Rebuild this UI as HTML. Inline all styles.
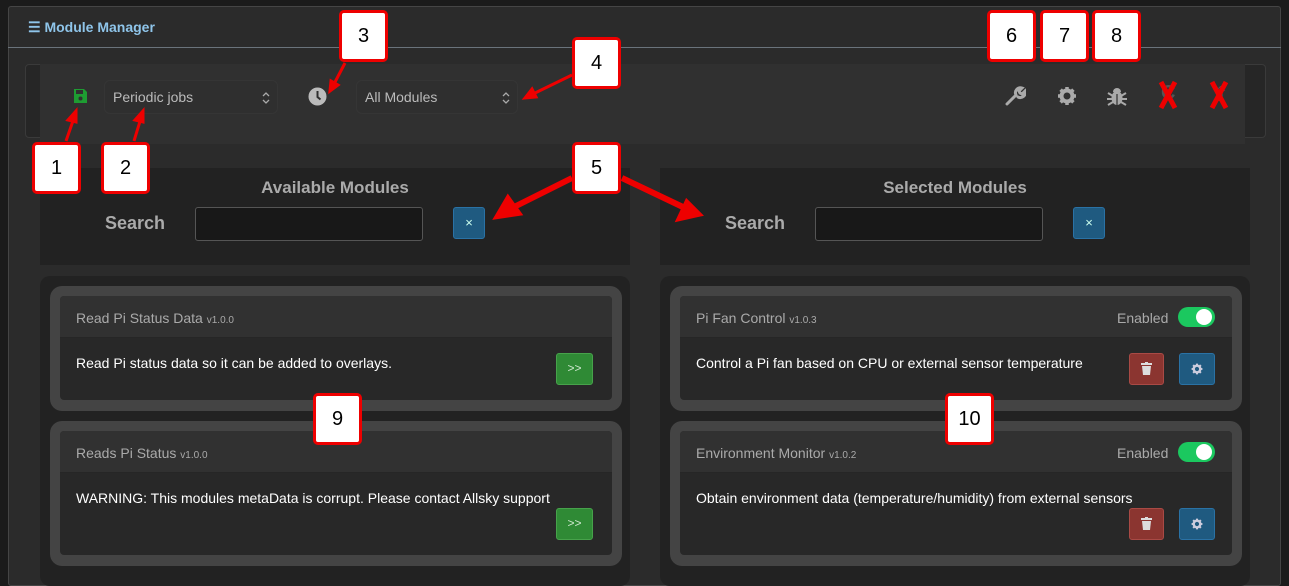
<!DOCTYPE html>
<html><head><meta charset="utf-8"><style>
*{box-sizing:border-box;margin:0;padding:0}
body{width:1289px;height:575px;background:#1b1b1b;font-family:"Liberation Sans",sans-serif;position:relative;overflow:hidden}
.a{position:absolute}
.panel{left:8px;top:6px;width:1273px;height:580px;background:#2b2b2b;border:1px solid #454545;border-radius:3px}
.hdr{left:8px;top:6px;width:1273px;height:42px;border-bottom:1px solid #6a737b}
.title{left:28px;top:19px;color:#8fc5ea;font-weight:bold;font-size:14px}
.tb-out{left:25px;top:64px;width:1241px;height:74px;border:1px solid #3a3a3a;border-radius:4px;background:#262626}
.tb{left:40px;top:64px;width:1205px;height:80px;background:#303030}
.sel{height:34px;border:1px solid #353535;border-radius:6px;color:#bbb;font-size:14px;padding:8px 8px;background:#2f2f2f}
.sel svg{position:absolute;right:6px;top:10px}
.sbox{background:#222;height:97px;top:168px;width:590px}
.h3{color:#aaa;font-weight:bold;font-size:17px;text-align:center}
.lab{color:#aaa;font-weight:bold;font-size:18px}
.inp{height:34px;background:#181818;border:1px solid #555;border-radius:3px}
.xb{width:32px;height:32px;background:#1f5a80;border:1px solid #2a72a5;border-radius:3px;color:#cfe;text-align:center;line-height:29px;font-size:13px}
.list{top:276px;width:590px;height:310px;background:#222;border-radius:10px}
.co{width:572px;background:#444;border-radius:12px}
.ci{width:552px;background:#282828;border-radius:4px}
.ch{height:42px;background:#313131;border-bottom:1px solid #262626;border-radius:4px 4px 0 0;color:#aaa;font-size:14px;padding:14px 16px}
.ch small{font-size:10px}
.desc{color:#fff;font-size:14px}
.gb{width:37px;height:32px;background:#2f8a35;border:1px solid #47a24b;border-radius:3px;color:#cfe8cf;text-align:center;line-height:29px;font-size:12px}
.rb{width:35px;height:32px;background:#8b3530;border:1px solid #a94a45;border-radius:3px}
.bb{width:36px;height:32px;background:#1f5a80;border:1px solid #2a72a5;border-radius:3px}
.tog{width:37px;height:20px;background:#1bc85f;border-radius:10px}
.tog:after{content:"";position:absolute;right:3px;top:2px;width:16px;height:16px;background:#fff;border-radius:50%}
.en{color:#aaa;font-size:14px}
.ann{width:49px;height:52px;background:#fff;border:3px solid #e00;border-radius:5px;font-size:20px;text-align:center;line-height:46px;color:#000}
</style></head><body>
<div class="a panel"></div>
<div class="a hdr"></div>
<div class="a title">☰ Module Manager</div>
<div class="a tb-out"></div>
<div class="a tb"></div>
<svg class="a" style="left:73px;top:88px" width="15" height="16" viewBox="0 0 15 16"><path d="M1 1h10l3 3v11H1z" fill="#1e9c32"/><rect x="3" y="2" width="7" height="4" fill="#303030"/><circle cx="7.5" cy="10.5" r="2" fill="#303030"/></svg>
<div class="a sel" style="left:104px;top:80px;width:174px">Periodic jobs<svg width="10" height="14"><path d="M2 5l3-3 3 3M2 9l3 3 3-3" stroke="#aaa" stroke-width="1.3" fill="none"/></svg></div>
<svg class="a" style="left:308px;top:87px" width="19" height="19" viewBox="0 0 19 19"><circle cx="9.5" cy="9.5" r="9" fill="#bbb"/><path d="M9.5 4v6l3 2.5" stroke="#303030" stroke-width="2" fill="none"/></svg>
<div class="a sel" style="left:356px;top:80px;width:162px">All Modules<svg width="10" height="14"><path d="M2 5l3-3 3 3M2 9l3 3 3-3" stroke="#aaa" stroke-width="1.3" fill="none"/></svg></div>
<svg class="a" style="left:1004px;top:85px" width="22" height="22" viewBox="0 0 22 22"><path d="M3 19l9-9M12 10a5 5 0 0 1 6-7l-3 3 1 2 2 1 3-3a5 5 0 0 1-7 6" stroke="#aaa" stroke-width="3" fill="none" stroke-linecap="round"/></svg>
<svg class="a" style="left:1057px;top:86px" width="20" height="20" viewBox="0 0 20 20"><circle cx="10" cy="10" r="5.5" fill="none" stroke="#aaa" stroke-width="4"/><path d="M10 1v4M10 15v4M1 10h4M15 10h4M3.6 3.6l3 3M13.4 13.4l3 3M3.6 16.4l3-3M13.4 6.6l3-3" stroke="#aaa" stroke-width="3.5"/></svg>
<svg class="a" style="left:1107px;top:85px" width="20" height="22" viewBox="0 0 20 22"><ellipse cx="10" cy="13" rx="5.5" ry="7" fill="#aaa"/><path d="M6 7a4 4 0 0 1 8 0z" fill="#aaa"/><path d="M1 8l5 3M19 8l-5 3M0 14h5M20 14h-5M1 20l5-3M19 20l-5-3" stroke="#aaa" stroke-width="2"/><path d="M10 9v12" stroke="#303030" stroke-width="1.2"/></svg>
<div class="a" style="left:1161px;top:82px;color:#555;font-size:20px;font-weight:bold">C</div>
<div class="a" style="left:1212px;top:82px;color:#555;font-size:20px">⇧</div>
<svg class="a" style="left:1155px;top:80px" width="90" height="30"><path d="M6 2l14 26M20 2L6 28M57 2l14 26M71 2L57 28" stroke="#e00" stroke-width="5"/></svg>

<div class="a sbox" style="left:40px"></div>
<div class="a h3" style="left:40px;top:178px;width:590px">Available Modules</div>
<div class="a lab" style="left:105px;top:213px">Search</div>
<div class="a inp" style="left:195px;top:207px;width:228px"></div>
<div class="a xb" style="left:453px;top:207px">×</div>
<div class="a sbox" style="left:660px"></div>
<div class="a h3" style="left:660px;top:178px;width:590px">Selected Modules</div>
<div class="a lab" style="left:725px;top:213px">Search</div>
<div class="a inp" style="left:815px;top:207px;width:228px"></div>
<div class="a xb" style="left:1073px;top:207px">×</div>

<div class="a list" style="left:40px"></div>
<div class="a list" style="left:660px"></div>

<div class="a co" style="left:50px;top:286px;height:125px"></div>
<div class="a ci" style="left:60px;top:296px;height:104px"><div class="ch">Read Pi Status Data <small>v1.0.0</small></div></div>
<div class="a desc" style="left:76px;top:355px">Read Pi status data so it can be added to overlays.</div>
<div class="a gb" style="left:556px;top:353px">&gt;&gt;</div>
<div class="a co" style="left:50px;top:421px;height:145px"></div>
<div class="a ci" style="left:60px;top:431px;height:124px"><div class="ch">Reads Pi Status <small>v1.0.0</small></div></div>
<div class="a desc" style="left:76px;top:490px">WARNING: This modules metaData is corrupt. Please contact Allsky support</div>
<div class="a gb" style="left:556px;top:508px">&gt;&gt;</div>

<div class="a co" style="left:670px;top:286px;height:125px"></div>
<div class="a ci" style="left:680px;top:296px;height:104px"><div class="ch">Pi Fan Control <small>v1.0.3</small></div></div>
<div class="a en" style="left:1117px;top:310px">Enabled</div><div class="a tog" style="left:1178px;top:307px"></div>
<div class="a desc" style="left:696px;top:355px">Control a Pi fan based on CPU or external sensor temperature</div>
<div class="a rb" style="left:1129px;top:353px"></div>
<svg class="a" style="left:1141px;top:362px" width="11" height="13"><rect x="0" y="1" width="11" height="2" fill="#ddd"/><rect x="4" y="0" width="3" height="2" fill="#ddd"/><path d="M1 4h9l-1 9H2z" fill="#ddd"/></svg>
<div class="a bb" style="left:1179px;top:353px"></div>
<svg class="a" style="left:1191px;top:363px" width="12" height="12" viewBox="0 0 20 20"><circle cx="10" cy="10" r="5.5" fill="none" stroke="#ccd" stroke-width="4"/><path d="M10 1v4M10 15v4M1 10h4M15 10h4M3.6 3.6l3 3M13.4 13.4l3 3M3.6 16.4l3-3M13.4 6.6l3-3" stroke="#ccd" stroke-width="3.5"/></svg>
<div class="a co" style="left:670px;top:421px;height:145px"></div>
<div class="a ci" style="left:680px;top:431px;height:124px"><div class="ch">Environment Monitor <small>v1.0.2</small></div></div>
<div class="a en" style="left:1117px;top:445px">Enabled</div><div class="a tog" style="left:1178px;top:442px"></div>
<div class="a desc" style="left:696px;top:490px">Obtain environment data (temperature/humidity) from external sensors</div>
<div class="a rb" style="left:1129px;top:508px"></div>
<svg class="a" style="left:1141px;top:517px" width="11" height="13"><rect x="0" y="1" width="11" height="2" fill="#ddd"/><rect x="4" y="0" width="3" height="2" fill="#ddd"/><path d="M1 4h9l-1 9H2z" fill="#ddd"/></svg>
<div class="a bb" style="left:1179px;top:508px"></div>
<svg class="a" style="left:1191px;top:518px" width="12" height="12" viewBox="0 0 20 20"><circle cx="10" cy="10" r="5.5" fill="none" stroke="#ccd" stroke-width="4"/><path d="M10 1v4M10 15v4M1 10h4M15 10h4M3.6 3.6l3 3M13.4 13.4l3 3M3.6 16.4l3-3M13.4 6.6l3-3" stroke="#ccd" stroke-width="3.5"/></svg>

<svg class="a" style="left:0;top:0" width="1289" height="575">
<g stroke="#e00" stroke-width="3" fill="#e00">
<path d="M66 141L74 118"/><path d="M76 111l-8 9 8 2z"/>
<path d="M134 141L141 118"/><path d="M143 111l-8 9 8 2z"/>
<path d="M345 63L334 84"/><path d="M330 91l1-10 7 4z"/>
<path d="M572 75L533 94"/><path d="M525 98l7-9 4 8z"/>
</g>
<g stroke="#e00" stroke-width="6" fill="#e00">
<path d="M572 178L512 208"/><path d="M498 216l10-17 10 14z"/>
<path d="M622 178L685 208"/><path d="M698 214l-18 4 7-15z"/>
</g>
</svg>
<div class="a ann" style="left:32px;top:142px">1</div>
<div class="a ann" style="left:101px;top:142px">2</div>
<div class="a ann" style="left:339px;top:10px">3</div>
<div class="a ann" style="left:572px;top:37px">4</div>
<div class="a ann" style="left:572px;top:142px">5</div>
<div class="a ann" style="left:987px;top:10px">6</div>
<div class="a ann" style="left:1040px;top:10px">7</div>
<div class="a ann" style="left:1092px;top:10px">8</div>
<div class="a ann" style="left:313px;top:393px">9</div>
<div class="a ann" style="left:945px;top:393px">10</div>
</body></html>
